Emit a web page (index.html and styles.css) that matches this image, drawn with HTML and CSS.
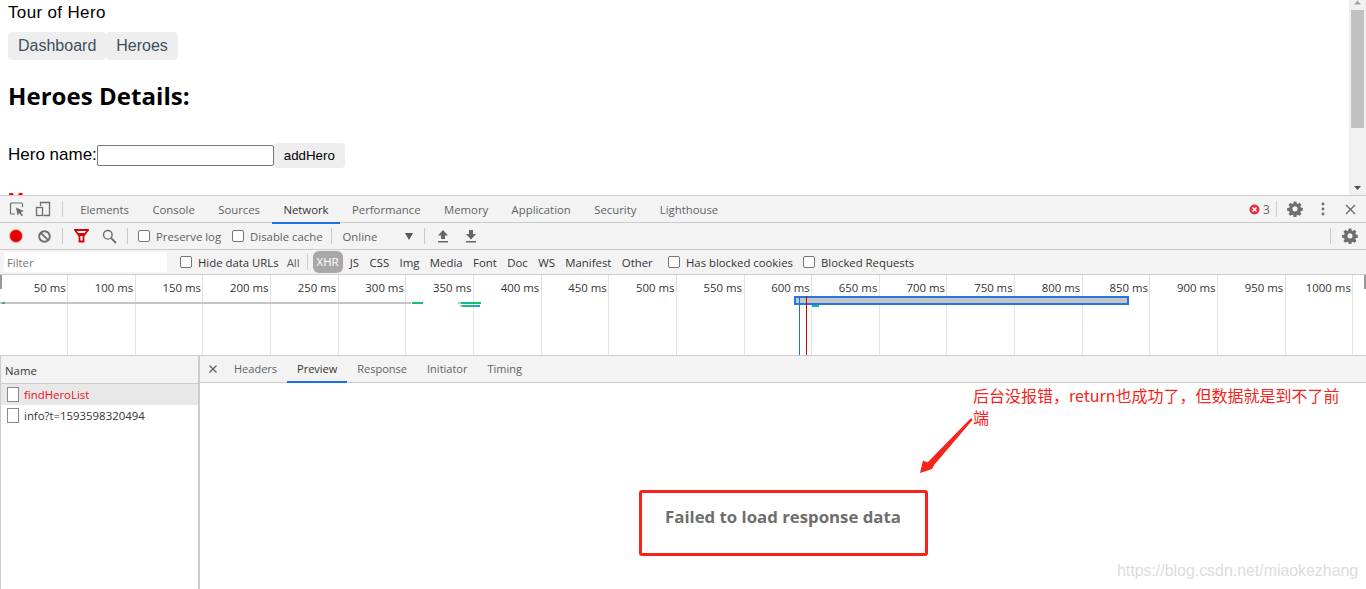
FILE: index.html
```html
<!DOCTYPE html>
<html lang="en">
<head>
<meta charset="utf-8">
<title>Tour of Hero</title>
<link rel="stylesheet" href="styles.css">
</head>
<body>
<div class="app">
  <div class="viewport">
    <main class="page">
      <div class="page-title">Tour of Hero</div>
      <nav class="nav"><a class="nav-btn">Dashboard</a><a class="nav-btn">Heroes</a></nav>
      <h2 class="details">Heroes Details:</h2>
      <div class="form"><label class="hero-label">Hero name:</label><input class="hero-input" type="text"><button class="add-btn">addHero</button></div>
      <h3 class="messages">Messages</h3>
    </main>
    <div class="scrollbar">
      <svg class="sb-arrow" width="17" height="9" viewBox="0 0 17 9"><path d="M5 6.500 8.500 2.500 12 6.500z" fill="#a3a3a3"/></svg>
      <div class="sb-thumb"></div>
      <svg class="sb-arrow-down" width="17" height="9" viewBox="0 0 17 9"><path d="M5 3h7L8.500 7z" fill="#505050"/></svg>
    </div>
  </div>
  <section class="devtools">
    <div class="bar tabs">
      <svg class="ic first" width="16" height="16" viewBox="0 0 16 16"><path d="M6 13H2.500a1 1 0 0 1-1-1V3a1 1 0 0 1 1-1h10a1 1 0 0 1 1 1v3" fill="none" stroke="#6e6e6e" stroke-width="1.200"/><path d="M7 6.500 15 10l-3.300 1.200 2.300 3-1.300 1-2.300-3L8.500 14.500z" fill="#6e6e6e"/></svg>
      <svg class="ic second" width="16" height="16" viewBox="0 0 16 16"><path d="M5.500 5V1.500h9v13h-6" fill="none" stroke="#6e6e6e" stroke-width="1.300"/><rect x="1.500" y="6.500" width="6" height="8" fill="none" stroke="#6e6e6e" stroke-width="1.300"/></svg>
      <span class="sep tab-sep"></span>
      <span class="tab t-first">Elements</span><span class="tab">Console</span><span class="tab">Sources</span><span class="tab active">Network</span><span class="tab">Performance</span><span class="tab">Memory</span><span class="tab">Application</span><span class="tab">Security</span><span class="tab">Lighthouse</span>
      <span class="spacer"></span>
      <svg class="err" width="11" height="11" viewBox="0 0 11 11"><circle cx="5.500" cy="5.500" r="5" fill="#e3303c"/><path d="M3.500 3.500l4 4m0-4l-4 4" stroke="#fff" stroke-width="1.500"/></svg>
      <span class="err-count">3</span>
      <span class="sep err-sep"></span>
      <svg class="gear" width="16" height="16" viewBox="0 0 16 16"><use href="#gear-shape"/></svg>
      <svg class="dots" width="4" height="14" viewBox="0 0 4 14"><circle cx="2" cy="2" r="1.400" fill="#6e6e6e"/><circle cx="2" cy="7" r="1.400" fill="#6e6e6e"/><circle cx="2" cy="12" r="1.400" fill="#6e6e6e"/></svg>
      <svg class="close" width="11" height="11" viewBox="0 0 11 11"><path d="M1 1l9 9m0-9l-9 9" stroke="#6e6e6e" stroke-width="1.400"/></svg>
    </div>
    <div class="bar tools">
      <svg class="rec" width="14" height="14" viewBox="0 0 14 14"><circle cx="7" cy="7" r="6.500" fill="#e60000" stroke="#f0b0b0"/></svg>
      <svg class="clear" width="13" height="13" viewBox="0 0 13 13"><circle cx="6.500" cy="6.500" r="5.300" fill="none" stroke="#6e6e6e" stroke-width="1.900"/><path d="M2.800 2.800l7.400 7.400" stroke="#6e6e6e" stroke-width="1.900"/></svg>
      <span class="sep sep-a"></span>
      <svg class="filter" width="15" height="14" viewBox="0 0 15 14"><path d="M1 1h13L9.500 7v5.500h-4V7z" fill="#fff" stroke="#d80000" stroke-width="1.800"/><path d="M4 4h7L9 7H6z" fill="#d80000"/></svg>
      <svg class="search" width="15" height="15" viewBox="0 0 15 15"><circle cx="5.800" cy="5.800" r="4.300" fill="none" stroke="#6e6e6e" stroke-width="1.400"/><path d="M9 9l5 5" stroke="#6e6e6e" stroke-width="1.800"/></svg>
      <span class="sep sep-b"></span>
      <span class="check c-preserve"></span><span class="lbl l-preserve">Preserve log</span>
      <span class="check c-cache"></span><span class="lbl l-cache">Disable cache</span>
      <span class="sep sep-c"></span>
      <span class="lbl l-online">Online</span>
      <svg class="caret" width="8" height="7" viewBox="0 0 8 7"><path d="M0 0h8L4 7z" fill="#5a5a5a"/></svg>
      <span class="sep sep-d"></span>
      <svg class="updown" width="12" height="13" viewBox="0 0 12 13"><path d="M6 0 11 5.500H8V9H4V5.500H1zM1 11h10v1.500H1z" fill="#666"/></svg>
      <svg class="updown down" width="12" height="13" viewBox="0 0 12 13"><path d="M4 0h4v4h3L6 9.500 1 4h3zM1 11h10v1.500H1z" fill="#666"/></svg>
      <span class="spacer"></span>
      <span class="sep sep-e"></span>
      <svg class="gear tool-gear" width="16" height="16" viewBox="0 0 16 16"><path id="gear-shape" fill="#6e6e6e" fill-rule="evenodd" d="M6.500 0h3l.4 2.200 1.300.6L13.100 1.500l2.100 2.100-1.300 1.900.6 1.300 2.200.4v3l-2.200.4-.6 1.300 1.300 1.900-2.100 2.100-1.900-1.300-1.300.6-.4 2.200h-3l-.4-2.200-1.300-.6-1.900 1.300L.8 13.900l1.300-1.900-.6-1.300L-.7 10.300v-3l2.200-.4.6-1.300L.8 3.600l2.100-2.100 1.900 1.300 1.300-.6zM8 5.400a2.800 2.800 0 1 0 0 5.600 2.800 2.800 0 0 0 0-5.600z" transform="translate(.8 .5) scale(.9)"/></svg>
    </div>
    <div class="bar filters">
      <span class="filter-input">Filter</span>
      <span class="check c-hide"></span><span class="lbl l-hide">Hide data URLs</span>
      <span class="type t-all">All</span>
      <span class="sep sep-f"></span>
      <span class="type xhr">XHR</span><span class="type">JS</span><span class="type">CSS</span><span class="type">Img</span><span class="type">Media</span><span class="type">Font</span><span class="type">Doc</span><span class="type">WS</span><span class="type">Manifest</span><span class="type">Other</span>
      <span class="check c-blocked"></span><span class="lbl l-blocked">Has blocked cookies</span>
      <span class="check c-req"></span><span class="lbl">Blocked Requests</span>
    </div>
    <div class="timeline">
      <div class="cell">50 ms</div><div class="cell">100 ms</div><div class="cell">150 ms</div><div class="cell">200 ms</div><div class="cell">250 ms</div><div class="cell">300 ms</div><div class="cell">350 ms</div><div class="cell">400 ms</div><div class="cell">450 ms</div><div class="cell">500 ms</div><div class="cell">550 ms</div><div class="cell">600 ms</div><div class="cell">650 ms</div><div class="cell">700 ms</div><div class="cell">750 ms</div><div class="cell">800 ms</div><div class="cell">850 ms</div><div class="cell">900 ms</div><div class="cell">950 ms</div><div class="cell">1000 ms</div>
      <span class="tl-edge"></span><span class="tl-edge right"></span>
      <span class="mark m-grey"></span><span class="mark m-teal"></span><span class="mark m-g1"></span>
      <span class="mark m-g2"></span><span class="mark m-g3"></span>
      <span class="mark m-select"></span><span class="mark m-g4"></span>
      <span class="mark m-blue"></span><span class="mark m-red"></span>
    </div>
    <div class="lower">
      <aside class="requests">
        <div class="req-head">Name</div>
        <div class="req-row selected"><span class="doc"></span><span class="failed">findHeroList</span></div>
        <div class="req-row"><span class="doc"></span><span>info?t=1593598320494</span></div>
      </aside>
      <div class="detail">
        <div class="detail-tabs">
          <svg class="x" width="8" height="8" viewBox="0 0 8 8"><path d="M.5.500l7 7m0-7l-7 7" stroke="#5f5f5f" stroke-width="1.300"/></svg>
          <span class="dtab">Headers</span><span class="dtab active">Preview</span><span class="dtab">Response</span><span class="dtab">Initiator</span><span class="dtab">Timing</span>
        </div>
        <div class="preview">
          <div class="fail-box">Failed to load response data</div>
        </div>
      </div>
    </div>
  </section>
  <p class="note">后台没报错，return也成功了，但数据就是到不了前端</p>
  <svg class="arrow" width="60" height="60" viewBox="0 0 60 60"><path d="M53 2 54.500 4 16.500 48.500 14 53 2 57 5 44.500 9.500 46.500z" fill="#f5231a"/></svg>
  <div class="watermark">https://blog.csdn.net/miaokezhang</div>
</div>
</body>
</html>
```
FILE: styles.css
```css
* { box-sizing: border-box; }
html, body { margin: 0; padding: 0; height: 100%; overflow: hidden; background: #fff; }
.app { position: relative; width: 1366px; height: 589px; overflow: hidden; display: flex; flex-direction: column; }

.viewport { height: 195px; flex: none; display: flex; overflow: hidden; }
.page { flex: 1; padding: 0 8px; font-family: "Liberation Sans", Arial, sans-serif; font-size: 17px; color: #000; overflow: hidden; }
.page-title { height: 32px; padding-top: 3px; line-height: 20px; letter-spacing: .35px; }
.nav { display: flex; height: 28px; }
.nav-btn { background: #eee; border-radius: 4px; color: #3d4f63; font-size: 16px; line-height: 28px; padding: 0 10px; }
.details { margin: 0; padding-top: 20px; height: 73px; font-family: "Open Sans", sans-serif; font-size: 24px; line-height: 32px; font-weight: 700; letter-spacing: .05px; }
.form { display: flex; align-items: center; height: 25px; margin-top: 10px; }
.hero-label { white-space: nowrap; padding-bottom: 2px; }
.hero-input { width: 177px; height: 21px; border: 1px solid #767676; border-radius: 2px; padding: 0; margin: 0; background: #fff; }
.add-btn { width: 71px; height: 25px; border: 0; border-radius: 4px; background: #eee; font-family: "Liberation Sans", Arial, sans-serif; font-size: 13.300px; color: #000; padding: 0; }
.messages { margin: 21px 0 0; color: #f00; font-size: 19px; font-weight: 700; line-height: 22px; }

.scrollbar { width: 17px; flex: none; background: #f1f1f1; display: flex; flex-direction: column; }
.sb-arrow { flex: none; margin-top: -2px; }
.sb-thumb { height: 118px; background: #c1c1c1; margin: 3px 0 0 2px; width: 13px; flex: none; }
.sb-arrow-down { margin-top: auto; margin-bottom: 3px; }

.devtools { flex: 1; min-height: 0; display: flex; flex-direction: column; background: #f3f3f3; font-family: "Open Sans", "Noto Sans", sans-serif; font-size: 12px; color: #5a5a5a; }
.bar { flex: none; display: flex; align-items: center; white-space: nowrap; border-bottom: 1px solid #ccc; }
.tabs { height: 28px; border-top: 1px solid #ccc; }
.tools { height: 27px; }
.filters { height: 25px; }
.spacer { flex: 1; }
.sep { width: 1px; height: 16px; background: #ccc; flex: none; }
.first { margin-left: 9px; }
.second { margin-left: 10px; }
.tab-sep { margin-left: 11px; }
.tab { height: 27px; line-height: 27px; padding: 0 11.700px; font-size: 11.350px; color: #5f6368; }
.t-first { margin-left: 5.500px; }
.tab.active { color: #333; position: relative; }
.tab.active::after, .dtab.active::after { content: ""; position: absolute; left: 0; right: 0; bottom: -1px; height: 2px; background: #1a73e8; }
.err { margin-right: 3px; }
.err-count { color: #666; font-size: 12px; width: 9px; }
.err-sep { margin-left: 4px; }
.gear { flex: none; }
.tabs .gear { margin-left: 10px; }
.dots { margin-left: 18px; }
.close { margin-left: 20px; margin-right: 10px; }

.rec { margin-left: 9px; }
.clear { margin-left: 15px; }
.sep-a { margin-left: 11px; }
.filter { margin-left: 11px; }
.search { margin-left: 13px; }
.sep-b { margin-left: 10px; }
.check { width: 12px; height: 12px; flex: none; background: #fff; border: 1px solid #767676; border-radius: 2px; }
.c-preserve { margin-left: 10px; }
.lbl { font-size: 11.350px; margin-left: 6px; color: #5f5f5f; }
.c-cache { margin-left: 11px; }
.sep-c { margin-left: 8px; }
.l-online { margin-left: 11px; width: 62px; }
.caret { margin-left: 0; }
.sep-d { margin-left: 11px; }
.updown { margin-left: 12px; flex: none; }
.updown.down { margin-left: 16px; }
.sep-e { margin-right: 11px; }
.tool-gear { margin-right: 8px; }

.filter-input { width: 163px; height: 20px; margin-left: 4px; padding-left: 3px; background: #fff; font-size: 11.300px; line-height: 22px; color: #757575; }
.c-hide { margin-left: 13px; }
.filters .lbl { color: #333; }
.type { font-size: 11.400px; color: #333; padding: 0 5.200px; }
.t-all { margin-left: 5px; color: #5f5f5f; padding: 0 3px; }
.sep-f { margin-left: 4px; }
.xhr { background: #a8a8a8; color: #fff; border-radius: 6px; height: 22px; line-height: 22px; padding: 0 4px; margin-left: 5px; margin-right: 2px; }
.c-blocked { margin-left: 10px; }
.c-req { margin-left: 10px; }

.timeline { flex: none; position: relative; height: 81px; display: flex; padding-left: .5px; background: #fff; border-bottom: 1px solid #ccc; }
.cell { width: 67.650px; flex: none; border-right: 1px solid #e2e2e2; text-align: right; padding: 5px 1.500px 0 0; font-size: 11.400px; line-height: 16px; color: #333; white-space: nowrap; }
.tl-edge { position: absolute; left: 0; top: 0; width: 2px; height: 14px; background: #999; }
.tl-edge.right { left: auto; right: 0; }
.mark { position: absolute; display: block; }
.m-grey { left: 0; top: 27px; width: 411px; height: 2px; background: #c4c4c4; }
.m-teal { left: 2px; top: 27px; width: 3px; height: 2px; background: #3fa79a; }
.m-g1 { left: 412px; top: 27px; width: 11px; height: 2px; background: linear-gradient(90deg, #0fc46a 80%, #17a2d8 80%); }
.m-g2 { left: 458px; top: 27px; width: 23px; height: 2px; background: linear-gradient(90deg, #c4c4c4 15%, #0fc46a 15%, #17a2d8 45%, #0fc46a 55%); }
.m-g3 { left: 460px; top: 30px; width: 20px; height: 2px; background: linear-gradient(90deg, #c4c4c4 10%, #0fc46a 10%, #0fc46a 70%, #17a2d8 70%); }
.m-select { left: 794px; top: 21px; width: 335px; height: 9px; background: #c6c6c6; border: 2px solid #1f78e6; }
.m-g4 { left: 812px; top: 30px; width: 7px; height: 2px; background: linear-gradient(90deg, #17a2d8 40%, #0fc46a 40%); }
.m-blue { left: 799px; top: 21px; width: 1px; height: 59px; background: #1a6fd8; }
.m-red { left: 806px; top: 21px; width: 1px; height: 59px; background: #c00; }

.lower { flex: 1; min-height: 0; display: flex; }
.requests { width: 200px; flex: none; background: #fff; border-left: 1px solid #ccc; border-right: 2px solid #ccc; }
.req-head { height: 28px; background: #f3f3f3; border-bottom: 1px solid #ccc; padding-left: 4px; font-size: 11.400px; line-height: 29px; color: #333; }
.req-row { height: 21px; display: flex; align-items: center; padding-left: 6px; font-size: 11.400px; color: #333; }
.req-row.selected { background: #e8e8e8; }
.failed { color: #e8111a; }
.doc { width: 12px; height: 15px; border: 1px solid #8a8a8a; background: #fff; margin-right: 5px; flex: none; }
.detail { flex: 1; min-width: 0; display: flex; flex-direction: column; background: #fff; }
.detail-tabs { height: 27px; flex: none; display: flex; align-items: center; background: #f3f3f3; border-bottom: 1px solid #ccc; }
.x { margin-left: 9px; margin-right: 7px; }
.dtab { position: relative; height: 26px; line-height: 26px; padding: 0 10px; font-size: 11px; color: #5f6368; }
.dtab.active { color: #333; }
.preview { flex: 1; position: relative; }
.fail-box { position: absolute; left: 439px; top: 107px; width: 289px; height: 66px; border: 3px solid #f5231a; border-radius: 3px; text-align: center; line-height: 48px; font-family: "Open Sans", sans-serif; font-size: 16.800px; font-weight: 700; color: #6e6e6e; padding-right: 1px; white-space: nowrap; }

.note { position: absolute; left: 973px; top: 384px; width: 372px; margin: 0; font-family: "Noto Sans CJK SC", "Liberation Sans", sans-serif; font-size: 16px; line-height: 22px; color: #f5231a; }
.arrow { position: absolute; left: 918px; top: 416px; }
.watermark { position: absolute; left: 1117px; top: 562px; font-family: "Liberation Sans", sans-serif; font-size: 15.900px; line-height: 18px; color: #dcdcdc; white-space: nowrap; }
```
